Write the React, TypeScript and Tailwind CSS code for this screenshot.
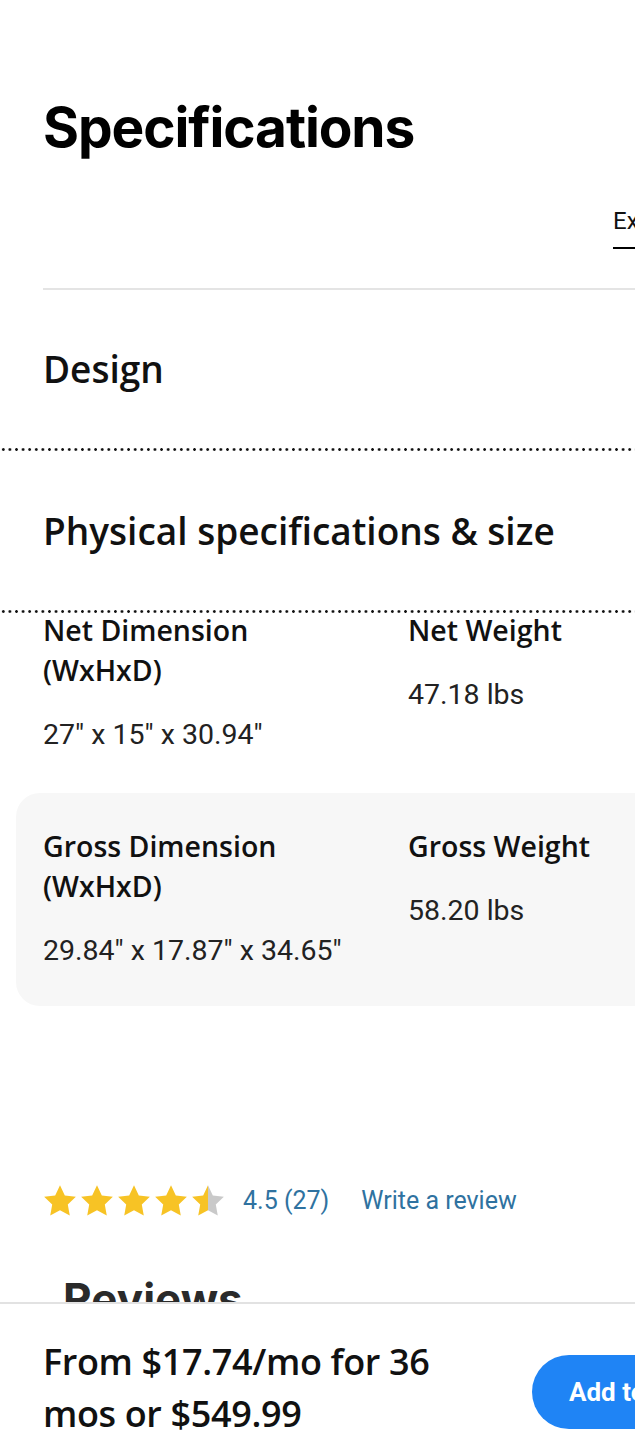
import { Fragment } from "react";

const body = "font-['Roboto','Noto_Sans',sans-serif]";
const label = "font-['Open_Sans','Noto_Sans',sans-serif]";

const dotted =
  "h-[3px] w-full bg-[radial-gradient(circle,#111_1.1px,transparent_1.6px)] bg-[length:6.6px_3px] bg-repeat-x";

function Star({ fill }: { fill: number }) {
  const id = `half-${fill}`;
  return (
    <svg width="34" height="33" viewBox="0 0 24 23">
      <defs>
        <linearGradient id={id}>
          <stop offset={`${fill * 100}%`} stopColor="#f7c325" />
          <stop offset={`${fill * 100}%`} stopColor="#c9c9c9" />
        </linearGradient>
      </defs>
      <path
        d="M12 0.8l3.4 7.1 7.8 1-5.7 5.4 1.4 7.7L12 18.3l-6.9 3.7 1.4-7.7L0.8 8.9l7.8-1z"
        fill={`url(#${id})`}
      />
    </svg>
  );
}

function SpecRow({
  items,
}: {
  items: { label: string[]; value: string }[];
}) {
  return (
    <div className="flex">
      {items.map((it, i) => (
        <div key={i} className={i === 0 ? "w-[365px] shrink-0" : "w-[300px] shrink-0"}>
          <p className={`${label} text-[28.5px] leading-[40px] font-semibold text-[#111]`}>
            {it.label.map((l, j) => (
              <Fragment key={j}>
                {l}
                {j < it.label.length - 1 && <br />}
              </Fragment>
            ))}
          </p>
          <p className="mt-[25px] text-[28.5px] leading-[40px] text-[#222]">{it.value}</p>
        </div>
      ))}
    </div>
  );
}

export default function App() {
  return (
    <div className={`${body} w-[635px] h-[1440px] overflow-hidden bg-white relative`}>
      <div className="w-[760px]">
        <h1 className="pl-[43px] pt-[92px] text-[55px] leading-[70px] font-bold tracking-[-0.02em] text-black font-['Inter',sans-serif]">
          Specifications
        </h1>

        <div className="flex justify-end pr-[12px] mt-[42px]">
          <span className="text-[24px] leading-[34px] text-[#111] border-b-2 border-black pb-[9px] w-[135px] whitespace-nowrap">
            Expand all
          </span>
        </div>

        <div className="ml-[43px] mt-[39px] h-[2px] bg-[#e4e4e4]" />

        <div className="h-[158px] flex items-center pl-[43px]">
          <h2 className={`${label} text-[37px] font-semibold text-[#111]`}>Design</h2>
        </div>
        <div className={dotted} />

        <div className="h-[159px] flex items-center pl-[43px]">
          <h2 className={`${label} text-[37px] font-semibold text-[#111]`}>
            Physical specifications &amp; size
          </h2>
        </div>
        <div className={dotted} />

        <div className="pl-[43px] -mt-[3px] pb-[38px]">
          <SpecRow
            items={[
              { label: ["Net Dimension", "(WxHxD)"], value: "27\" x 15\" x 30.94\"" },
              { label: ["Net Weight"], value: "47.18 lbs" },
            ]}
          />
        </div>

        <div className="ml-[16px] rounded-[24px] bg-[#f7f7f7] pl-[27px] pt-[33px] pb-[35px]">
          <SpecRow
            items={[
              { label: ["Gross Dimension", "(WxHxD)"], value: "29.84\" x 17.87\" x 34.65\"" },
              { label: ["Gross Weight"], value: "58.20 lbs" },
            ]}
          />
        </div>

        <div className="pl-[43px] mt-[176px] flex items-center">
          <div className="flex gap-[3px]">
            {[1, 1, 1, 1, 0.5].map((f, i) => (
              <Star key={i} fill={f} />
            ))}
          </div>
          <span className="ml-[18px] text-[25px] text-[#2f72a0]">4.5 (27)</span>
          <span className="ml-[32px] text-[25px] text-[#2f72a0]">Write a review</span>
        </div>

        <h2 className="pl-[63px] mt-[46px] text-[44px] font-bold text-[#2a2a2a] font-['Inter',sans-serif]">
          Reviews
        </h2>
      </div>

      <div className="absolute left-0 bottom-0 w-[635px] h-[138px] bg-white border-t-2 border-[#e2e2e2] flex items-center">
        <p className={`${label} pl-[43px] w-[460px] shrink-0 pt-[32px] text-[36px] leading-[52px] font-semibold tracking-[-0.01em] text-[#111]`}>
          From $17.74/mo for 36 mos or $549.99
        </p>
        <button className="ml-[72px] mt-[40px] h-[74px] w-[200px] shrink-0 rounded-full bg-[#1f84f5] text-white text-[26px] font-bold pl-[37px] text-left whitespace-nowrap">
          Add to cart
        </button>
      </div>
    </div>
  );
}
